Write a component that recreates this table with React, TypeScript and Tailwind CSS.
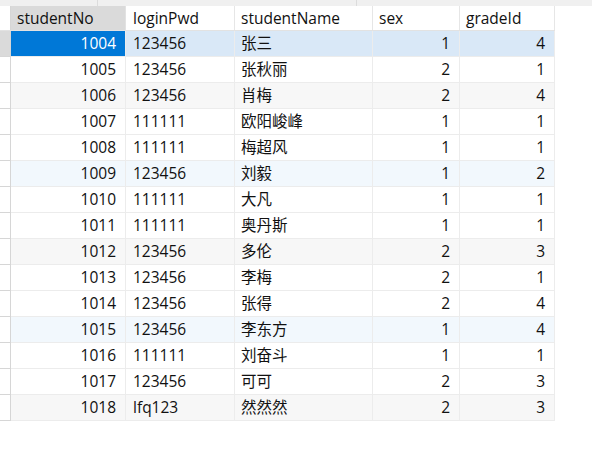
import React from "react";

const rows: [string, string, string, string, string][] = [
  ["1004", "123456", "张三", "1", "4"],
  ["1005", "123456", "张秋丽", "2", "1"],
  ["1006", "123456", "肖梅", "2", "4"],
  ["1007", "111111", "欧阳峻峰", "1", "1"],
  ["1008", "111111", "梅超风", "1", "1"],
  ["1009", "123456", "刘毅", "1", "2"],
  ["1010", "111111", "大凡", "1", "1"],
  ["1011", "111111", "奥丹斯", "1", "1"],
  ["1012", "123456", "多伦", "2", "3"],
  ["1013", "123456", "李梅", "2", "1"],
  ["1014", "123456", "张得", "2", "4"],
  ["1015", "123456", "李东方", "1", "4"],
  ["1016", "111111", "刘奋斗", "1", "1"],
  ["1017", "123456", "可可", "2", "3"],
  ["1018", "lfq123", "然然然", "2", "3"],
];

function rowBg(i: number) {
  if (i === 0) return "bg-[#d9e8f7]";
  if (i === 2 || i === 8 || i === 14) return "bg-[#f7f7f7]";
  if (i === 5 || i === 11) return "bg-[#f2f8fd]";
  return "bg-white";
}

export default function App() {
  return (
    <div
      className="w-[592px] h-[460px] bg-white text-[15.5px] text-[#111111] overflow-hidden"
      style={{ fontFamily: '"Open Sans", "Noto Sans CJK SC", sans-serif' }}
    >
      <div className="flex h-[6px] bg-[#f0f0f0]">
        <div className="w-[98px] border-r border-[#dcdcdc]" />
        <div className="w-[259px] border-r border-[#dcdcdc]" />
      </div>
      <div className="flex flex-col w-[555px]">
        <div className="flex h-[25px] border-b border-[#e2e2e2]">
          <div className="w-[11px] bg-white border-r border-[#d6d6d6]" />
          <div className="w-[115px] bg-[#dadada] border-r border-[#e2e2e2] flex items-center pl-[6px] pt-[1px]">studentNo</div>
          <div className="w-[109px] bg-white border-r border-[#e6e6e6] flex items-center pl-[7px] pt-[1px]">loginPwd</div>
          <div className="w-[138px] bg-white border-r border-[#e6e6e6] flex items-center pl-[6px] pt-[1px]">studentName</div>
          <div className="w-[87px] bg-white border-r border-[#e6e6e6] flex items-center pl-[6px] pt-[1px]">sex</div>
          <div className="w-[95px] bg-white border-r border-[#e6e6e6] flex items-center pl-[6px] pt-[1px]">gradeId</div>
        </div>
        {rows.map((r, i) => (
          <div key={r[0]} className={`flex h-[26px] ${rowBg(i)}`}>
            <div
              className={`w-[11px] border-r border-b border-[#d6d6d6] ${i === 0 ? "bg-[#dadada]" : "bg-white"}`}
            />
            <div
              className={`w-[115px] border-r border-b border-[#ececec] flex items-center justify-end pr-[9px] pt-[1px] ${
                i === 0 ? "bg-[#0078d7] text-white" : ""
              }`}
            >
              {r[0]}
            </div>
            <div className="w-[109px] border-r border-b border-[#ececec] flex items-center pl-[7px] pt-[1px]">{r[1]}</div>
            <div className="w-[138px] border-r border-b border-[#ececec] flex items-center pl-[6px] pt-[1px]">{r[2]}</div>
            <div className="w-[87px] border-r border-b border-[#ececec] flex items-center justify-end pr-[9px] pt-[1px]">{r[3]}</div>
            <div className="w-[95px] border-r border-b border-[#ececec] flex items-center justify-end pr-[9px] pt-[1px]">{r[4]}</div>
          </div>
        ))}
      </div>
    </div>
  );
}
